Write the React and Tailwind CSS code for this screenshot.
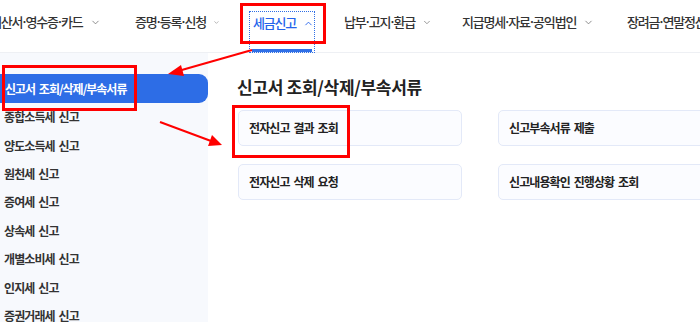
import React from 'react';
import { ChevronDown, ChevronUp } from 'lucide-react';

const navItems = [
  { parts: ['계산서', '영수증', '카드'], w: 'w-[115px]' },
  { parts: ['증명', '등록', '신청'], w: 'w-[85px]' },
  { parts: ['세금신고'], w: 'w-[64px]', active: true },
  { parts: ['납부', '고지', '환급'], w: 'w-[88px]' },
  { parts: ['지급명세', '자료', '공익법인'], w: 'w-[135px]' },
  { parts: ['장려금', '연말정산', '전자기부금'], w: 'w-[160px]' },
];

const sideItems = [
  '신고서 조회/삭제/부속서류',
  '종합소득세 신고',
  '양도소득세 신고',
  '원천세 신고',
  '증여세 신고',
  '상속세 신고',
  '개별소비세 신고',
  '인지세 신고',
  '증권거래세 신고',
];

const cards = ['전자신고 결과 조회', '신고부속서류 제출', '전자신고 삭제 요청', '신고내용확인 진행상황 조회'];

// label with tight middle dots
const NavLabel = ({ parts }) => (
  <span>
    {parts.map((p, i) => (
      <React.Fragment key={p}>
        {i > 0 && <span className="mx-[-1.5px]">·</span>}
        {p}
      </React.Fragment>
    ))}
  </span>
);

const App = () => {
  return (
    <div
      className="relative w-[700px] h-[322px] overflow-hidden bg-white text-[#222]"
      style={{ fontFamily: '"Noto Sans CJK KR", "Noto Sans", sans-serif' }}
    >
      {/* Top navigation */}
      <header className="h-[53px] border-b border-[#eef0f4] flex items-start gap-[30px] ml-[-10px] whitespace-nowrap">
        {navItems.map((item) =>
          item.active ? (
            <div
              key={item.w}
              className={`${item.w} shrink-0 h-[40px] mt-[12px] flex flex-col outline outline-1 outline-dotted outline-[#2f6fe6]`}
            >
              <div className="flex items-center gap-[7px] pl-[3px] pt-[3px] text-[13px] tracking-[-1.2px] font-medium text-[#2563eb] leading-[16px]">
                <NavLabel parts={item.parts} />
                <ChevronUp size={11} strokeWidth={2} className="text-[#2563eb]" />
              </div>
              <div className="mt-auto mx-[2px] h-[3px] bg-[#2f6fe6]" />
            </div>
          ) : (
            <div
              key={item.w}
              className={`${item.w} shrink-0 flex items-center gap-[7px] pt-[14px] text-[13px] tracking-[-1.2px] font-medium text-[#333] leading-[16px]`}
            >
              <NavLabel parts={item.parts} />
              <ChevronDown size={11} strokeWidth={1.8} className="text-[#777]" />
            </div>
          )
        )}
      </header>

      <div className="flex h-[269px]">
        {/* Sidebar */}
        <aside className="w-[208px] shrink-0 bg-[#f7f9fd] pt-[21px]">
          {sideItems.map((label, i) =>
            i === 0 ? (
              <div
                key={label}
                className="h-[29px] flex items-center pl-[5px] bg-[#2d6de6] rounded-r-[9px] text-white font-bold text-[12px] tracking-[-1px] [word-spacing:2px]"
              >
                {label}
              </div>
            ) : (
              <div
                key={label}
                className="h-[28.4px] flex items-center pl-[4px] text-[#333] font-semibold text-[12px] tracking-[-0.9px] [word-spacing:2px]"
              >
                {label}
              </div>
            )
          )}
        </aside>

        {/* Main content */}
        <main className="pl-[29px] pt-[22px] shrink-0">
          <h2 className="text-[17px] font-bold tracking-[-0.3px] leading-[24px] text-[#222]">신고서 조회/삭제/부속서류</h2>
          <div className="grid grid-cols-[224px_224px] gap-x-[36px] gap-y-[18px] mt-[11px] ml-[1px]">
            {cards.map((c) => (
              <div
                key={c}
                className="h-[36px] flex items-center px-[10px] rounded-[5px] border border-[#e3e9f8] bg-[#fbfcff] text-[12px] font-semibold tracking-[-0.9px] [word-spacing:2px] text-[#222] whitespace-nowrap"
              >
                {c}
              </div>
            ))}
          </div>
        </main>
      </div>

      {/* Red annotation boxes */}
      <div className="absolute left-[240px] top-[3px] w-[86px] h-[41px] border-[3px] border-[#f00]" />
      <div className="absolute left-[2px] top-[65px] w-[135px] h-[46px] border-[3px] border-[#f00]" />
      <div className="absolute left-[232px] top-[105px] w-[118px] h-[53px] border-[3px] border-[#f00]" />

      {/* Red arrows */}
      <svg className="absolute inset-0 pointer-events-none" width="700" height="322" viewBox="0 0 700 322">
        <line x1="252" y1="50" x2="180" y2="70.5" stroke="#f00" strokeWidth="2" />
        <polygon points="168,74 181,65 184,76" fill="#f00" />
        <line x1="160" y1="122" x2="211" y2="141" stroke="#f00" strokeWidth="2" />
        <polygon points="222,145 208,146 212,135" fill="#f00" />
      </svg>
    </div>
  );
};

export default App;
